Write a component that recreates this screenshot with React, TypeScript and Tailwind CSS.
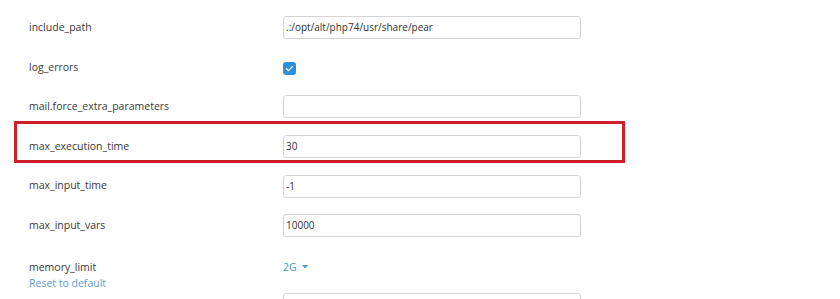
import React from 'react';

type Row = { name: string; kind: 'text' | 'check' | 'select'; value?: string; highlight?: boolean };

const rows: Row[] = [
  { name: 'include_path', kind: 'text', value: '.:/opt/alt/php74/usr/share/pear' },
  { name: 'log_errors', kind: 'check' },
  { name: 'mail.force_extra_parameters', kind: 'text', value: '' },
  { name: 'max_execution_time', kind: 'text', value: '30', highlight: true },
  { name: 'max_input_time', kind: 'text', value: '-1' },
  { name: 'max_input_vars', kind: 'text', value: '10000' },
  { name: 'memory_limit', kind: 'select', value: '2G' },
  // next row only peeks in at the bottom edge
  { name: '', kind: 'text', value: '' },
];

const Field: React.FC<{ row: Row }> = ({ row }) => {
  if (row.kind === 'check') {
    return (
      <span className="flex h-[13px] w-[13px] items-center justify-center rounded-[3px] bg-[#2e8fdc] mt-[3px]">
        <svg width="9" height="9" viewBox="0 0 10 10" fill="none">
          <path d="M1.6 5.2 L4 7.4 L8.4 2.6" stroke="#fff" strokeWidth="1.4" strokeLinecap="round" strokeLinejoin="round" />
        </svg>
      </span>
    );
  }
  if (row.kind === 'select') {
    return (
      <span className="flex items-center gap-[5px] text-[10.5px] text-[#4a97c9]">
        {row.value}
        <svg width="6" height="4" viewBox="0 0 6 4">
          <path d="M0 0 L6 0 L3 3.5 Z" fill="#4a97c9" />
        </svg>
      </span>
    );
  }
  return (
    <div className="flex h-[23px] w-[298px] items-center rounded-[3px] border border-[#d4d4d4] bg-white px-[2px] text-[10px] text-[#333]">
      {row.value}
    </div>
  );
};

export default function App() {
  return (
    <div className="h-[299px] w-[840px] overflow-hidden bg-white pt-[8px]" style={{ fontFamily: '"Open Sans", "Noto Sans", sans-serif' }}>
      {rows.map((row, i) => (
        <div key={i} className="relative flex h-[39.6px] items-center pl-[29px]">
          {row.kind === 'select' ? (
            <div className="flex w-[254px] flex-col self-start pt-[13px] text-[10.5px] leading-[16px]">
              <span className="text-[#3a3a3a]">{row.name}</span>
              <span className="text-[#5b9bd0]">Reset to default</span>
            </div>
          ) : (
            <span className="w-[254px] text-[10.5px] text-[#3a3a3a]">{row.name}</span>
          )}
          <div className={row.kind === 'select' ? 'self-start pt-[14px]' : ''}>
            <Field row={row} />
          </div>
          {row.highlight && (
            <div className="pointer-events-none absolute left-[14px] top-[-6px] h-[42px] w-[611px] border-[3px] border-[#cf1f2b]" />
          )}
        </div>
      ))}
    </div>
  );
}
